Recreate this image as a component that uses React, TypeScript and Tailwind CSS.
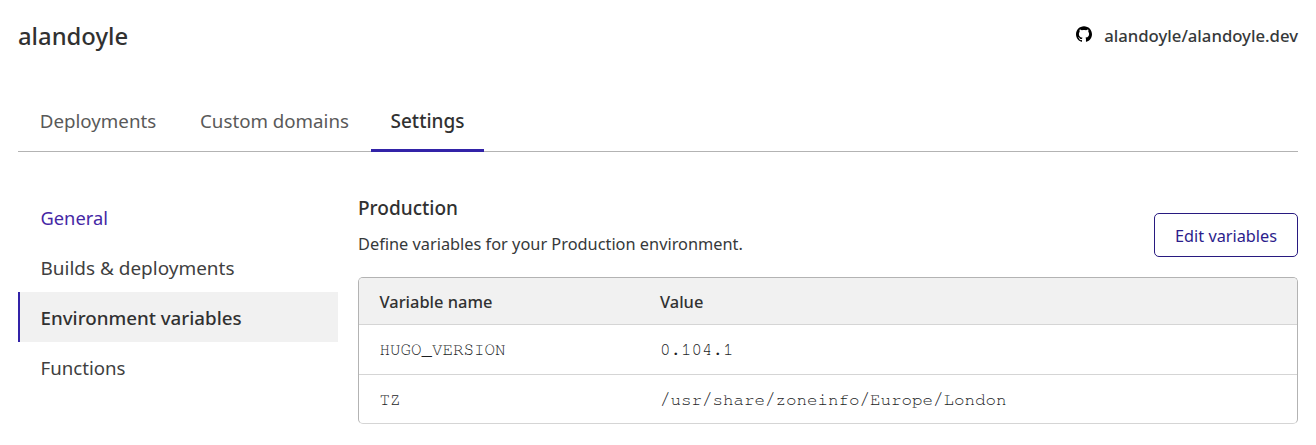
import { SiGithub } from 'react-icons/si';

const tabs = [
  { label: 'Deployments', className: 'w-[160px] text-[18.73px] text-[#595959]' },
  { label: 'Custom domains', className: 'w-[193px] text-[18.72px] text-[#595959]' },
  {
    label: 'Settings',
    className: 'w-[113px] border-b-[3px] border-[#3223a8] text-[19px] font-medium text-[#313131]',
  },
];

const sections = [
  { label: 'General', className: 'border-transparent pt-px text-[18.3px] text-[#4527a5]' },
  { label: 'Builds & deployments', className: 'border-transparent pt-[2px] text-[18.97px] text-[#404040]' },
  {
    label: 'Environment variables',
    className: 'border-[#3223a8] bg-[#f1f1f1] pt-[2px] text-[18.76px] font-medium text-[#313131]',
  },
  { label: 'Functions', className: 'border-transparent pt-[2px] text-[18.66px] text-[#404040]' },
];

const variables = [
  { name: 'HUGO_VERSION', value: '0.104.1', className: 'pt-[2px]' },
  { name: 'TZ', value: '/usr/share/zoneinfo/Europe/London', className: 'pt-px' },
];

function Header() {
  return (
    <header className="flex h-[72px] items-center justify-between">
      <h1 className="pt-[2px] text-[23.8px] font-medium text-[#313131]">alandoyle</h1>
      <a className="flex items-center gap-3 text-[16.72px] font-medium text-[#36393a]">
        <SiGithub className="mb-[3px] size-4 text-black" />
        alandoyle/alandoyle.dev
      </a>
    </header>
  );
}

function Tabs() {
  return (
    <nav className="mt-[18px] flex h-[62px] border-b border-[#b3b3b3]">
      {tabs.map((tab) => (
        <a key={tab.label} className={`-mb-px flex h-[62px] justify-center pt-[17px] leading-7 ${tab.className}`}>
          {tab.label}
        </a>
      ))}
    </nav>
  );
}

function Sidebar() {
  return (
    <aside className="flex w-80 shrink-0 flex-col">
      {sections.map((section) => (
        <a key={section.label} className={`flex h-[50px] items-center border-l-2 pl-[20.5px] ${section.className}`}>
          {section.label}
        </a>
      ))}
    </aside>
  );
}

function VariablesTable() {
  return (
    <div className="mt-5 h-[147px] overflow-hidden rounded-[5px] border border-[#b3b3b3] border-b-[#d5d5d5]">
      <div className="grid h-[47px] grid-cols-[280.5px_1fr] items-center border-b border-[#d5d5d5] bg-[#f1f1f1] pt-[2px] pl-[20.5px] text-[16.43px] font-medium text-[#313131]">
        <span>Variable name</span>
        <span>Value</span>
      </div>
      {variables.map((variable) => (
        <div
          key={variable.name}
          className={`grid h-[50px] grid-cols-[280.5px_1fr] items-center border-b border-[#d5d5d5] pl-[20.5px] font-['FreeMono','Liberation_Mono',monospace] text-[17.5px] text-[#1c1e1f] last:border-b-0 ${variable.className}`}
        >
          <span>{variable.name}</span>
          <span>{variable.value}</span>
        </div>
      ))}
    </div>
  );
}

export default function App() {
  return (
    <div className="h-[445px] bg-white px-[18px] font-['Noto_Sans',sans-serif]">
      <Header />
      <Tabs />
      <div className="mt-10 flex gap-5">
        <Sidebar />
        <main className="min-w-0 flex-1">
          <div className="flex h-[65px] items-end justify-between">
            <div className="h-[65px]">
              <h2 className="text-[19.04px] leading-8 font-medium text-[#313131]">Production</h2>
              <p className="mt-1 text-[16.33px] leading-8 text-[#36393a]">
                Define variables for your Production environment.
              </p>
            </div>
            <button className="h-11 w-36 rounded-[5px] border border-[#281a80] pt-[2px] text-[16.28px] text-[#2c1d8c]">
              Edit variables
            </button>
          </div>
          <VariablesTable />
        </main>
      </div>
    </div>
  );
}
